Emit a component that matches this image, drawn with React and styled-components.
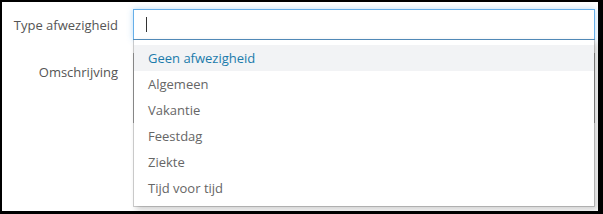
import React from 'react';
import styled, { createGlobalStyle } from 'styled-components';

const GlobalStyle = createGlobalStyle`
    html, body {
        margin: 0;
        padding: 0;
        background: #000;
    }
    * {
        box-sizing: border-box;
    }
`;

const options = ['Geen afwezigheid', 'Algemeen', 'Vakantie', 'Feestdag', 'Ziekte', 'Tijd voor tijd'];

export default function App() {
    return (
        <>
            <GlobalStyle />
            <SFrame>
                <SPanel>
                    <SLabel>Type afwezigheid</SLabel>
                    <SSelectWrap>
                        <SInput>
                            <SCaret />
                        </SInput>
                        <SMenu>
                            {options.map((o, i) => (
                                <SOption key={o} active={i === 0}>{o}</SOption>
                            ))}
                        </SMenu>
                    </SSelectWrap>
                    <SLabel top>Omschrijving</SLabel>
                    <STextarea />
                </SPanel>
            </SFrame>
        </>
    );
}

const SFrame = styled.div`
    width: 603px;
    height: 214px;
    padding: 2px 5px 3px 2px;
    background: #000;
`;

const SPanel = styled.div`
    height: 100%;
    background: #fff;
    display: grid;
    grid-template-columns: 116px 1fr;
    grid-template-rows: 31px 70px;
    column-gap: 15px;
    row-gap: 13px;
    padding: 7px 3px 0 0;
    align-content: start;
    font-family: "Open Sans", "Liberation Sans", sans-serif;
`;

const SLabel = styled.div`
    font-size: 13px;
    color: #555;
    text-align: right;
    display: flex;
    justify-content: flex-end;
    align-items: ${(p) => (p.top ? 'flex-start' : 'center')};
    padding-top: ${(p) => (p.top ? '10px' : '0')};
    white-space: nowrap;
`;

const SSelectWrap = styled.div`
    position: relative;
    z-index: 2;
`;

const SInput = styled.div`
    height: 31px;
    border: 1px solid #66afe9;
    box-shadow: 0 0 6px rgba(102, 175, 233, 0.45);
    background: #fff;
    display: flex;
    align-items: center;
    padding-left: 12px;
`;

const SCaret = styled.span`
    width: 1px;
    height: 15px;
    background: #333;
`;

const SMenu = styled.div`
    position: absolute;
    top: 30px;
    left: 0;
    right: 0;
    height: 168px;
    background: #fff;
    background-clip: padding-box;
    border: 1px solid rgba(0, 0, 0, 0.18);
    box-shadow: 3px 3px 6px rgba(0, 0, 0, 0.18);
    padding: 5px 0;
`;

const SOption = styled.div`
    height: 26px;
    line-height: 26px;
    padding-left: 14px;
    font-size: 13px;
    color: ${(p) => (p.active ? '#1b7bab' : '#666')};
    background: ${(p) => (p.active ? '#f2f3f5' : 'transparent')};
`;

const STextarea = styled.div`
    border: 1px solid #aaa;
    background: #fff;
`;
